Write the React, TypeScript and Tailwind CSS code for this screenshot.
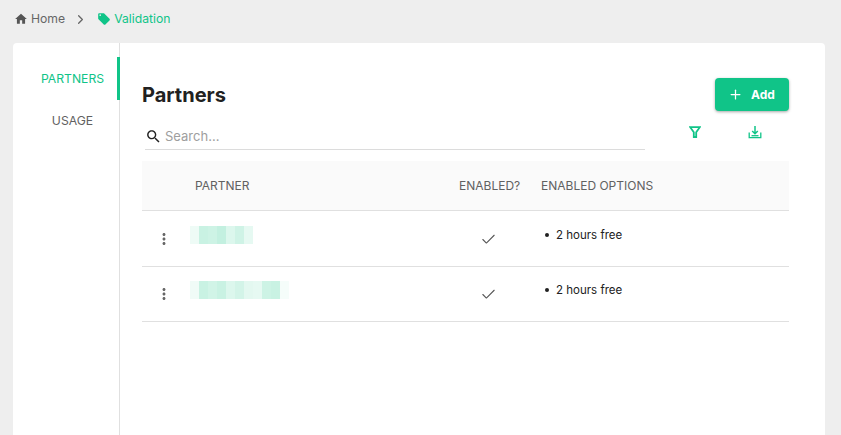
import { Check, ChevronRight, Plus } from 'lucide-react'

const rows = [
  {
    id: 'a',
    frame: 'h-[56px] pt-[15px]',
    blur: ['#eefbf6', '#c9f2e3', '#cdf3e5', '#c3f0e0', '#dcf7ed', '#cff3e6', '#e6f9f2'],
  },
  {
    id: 'b',
    frame: 'h-[55px] pt-[14px]',
    blur: ['#f0fbf7', '#c9f2e3', '#d1f4e7', '#c9f2e3', '#dcf7ed', '#d3f4e8', '#e3f8f0', '#e6f9f2', '#cdf3e5', '#c9f2e3', '#f5fdfa'],
  },
]

function Blur({ cells }: { cells: string[] }) {
  return (
    <div className="flex h-[18px]">
      {cells.map((c, i) => (
        <div key={i} className="w-[9px]" style={{ backgroundColor: c }} />
      ))}
    </div>
  )
}

function Glyph({ d, size, className }: { d: string; size: number; className?: string }) {
  return (
    <svg width={size} height={size} viewBox="0 0 24 24" fill="currentColor" className={className}>
      <path d={d} />
    </svg>
  )
}

export default function App() {
  return (
    <div className="h-[435px] overflow-hidden bg-[#eeeeee] font-['Inter',sans-serif] text-[#212121]">
      {/* Breadcrumb */}
      <div className="flex h-[43px] items-center pb-[5px] pl-[14px] text-[12.2px]">
        <Glyph d="M10 20v-6h4v6h5v-8h3L12 3 2 12h3v8z" size={14} className="text-[#555555]" />
        <span className="ml-[3px] text-[#666666]">Home</span>
        <ChevronRight size={15} strokeWidth={2} className="ml-[8px] text-[#666666]" />
        <Glyph
          d="M21.41 11.58l-9-9C12.05 2.22 11.55 2 11 2H4c-1.1 0-2 .9-2 2v7c0 .55.22 1.05.59 1.42l9 9c.36.36.86.58 1.41.58.55 0 1.05-.22 1.41-.59l7-7c.37-.36.59-.86.59-1.41 0-.55-.23-1.06-.59-1.42zM5.5 7C4.67 7 4 6.33 4 5.5S4.67 4 5.5 4 7 4.67 7 5.5 6.33 7 5.5 7z"
          size={14}
          className="ml-[9px] text-[#10c488]"
        />
        <span className="ml-[3px] text-[#10c488]">Validation</span>
      </div>

      {/* Card */}
      <div className="ml-[13px] mr-[16px] flex h-[392px] rounded-t-[4px] bg-white">
        <div className="w-[107px] border-r border-[#e0e0e0] pt-[14px] text-[12.2px]">
          <div className="-mr-px flex h-[43px] items-center justify-center border-r-[3px] border-[#10c488] pl-[15px] pt-[1px] text-[#10c488]">
            PARTNERS
          </div>
          <div className="flex h-[43px] items-center justify-center pl-[13px] text-[#616161]">USAGE</div>
        </div>

        <div className="box-content w-[647px] pl-[22px]">
          <div className="flex h-[68px] items-end justify-between">
            <h1 className="mb-[1px] text-[20px] font-bold leading-[30px] text-[#212121]">Partners</h1>
            <button className="flex h-[33px] w-[74px] items-center gap-[8px] rounded-[4px] bg-[#10c488] pl-[13px] text-[12px] font-bold text-white shadow-[0_1px_3px_rgba(0,0,0,0.35)]">
              <Plus size={15} strokeWidth={2} />
              Add
            </button>
          </div>

          <div className="flex h-[50px]">
            <div className="ml-[3px] mt-[12px] flex h-[27px] w-[500px] items-center gap-[3px] border-b border-[#dcdcdc] pt-[1px]">
              <Glyph
                d="M15.5 14h-.79l-.28-.27C15.41 12.59 16 11.11 16 9.5 16 5.91 13.09 3 9.5 3S3 5.91 3 9.5 5.91 16 9.5 16c1.61 0 3.09-.59 4.23-1.57l.27.28v.79l5 4.99L20.49 19l-4.99-5zm-6 0C7.01 14 5 11.99 5 9.5S7.01 5 9.5 5 14 7.01 14 9.5 11.99 14 9.5 14z"
                size={17}
                className="text-[#212121]"
              />
              <span className="text-[13px] text-[#9e9e9e]">Search...</span>
            </div>
            <div className="ml-[44px] mt-[15px]">
              <svg width="12" height="12" viewBox="0 0 12 12" fill="none" stroke="#10c488" strokeWidth="1.8">
                <path d="M1.2 1.2h9.6L7.2 6.2V11H4.8V6.2z" />
              </svg>
            </div>
            <div className="ml-[47px] mt-[14px]">
              <svg width="14" height="14" viewBox="0 0 14 14" fill="none" stroke="#10c488" strokeWidth="1.3">
                <path d="M1.2 7.5V12.6H12.8V7.5" />
                <path d="M7 1V8.5M4.2 6L7 8.8 9.8 6" strokeWidth="1.5" />
                <path d="M3.5 10.7H10.5" />
              </svg>
            </div>
          </div>

          {/* Table */}
          <div className="grid h-[50px] grid-cols-[317px_82px_1fr] items-center border-b border-[#e0e0e0] bg-[#fafafa] text-[12px] text-[#616161]">
            <div className="pl-[53px]">PARTNER</div>
            <div>ENABLED?</div>
            <div>ENABLED OPTIONS</div>
          </div>
          {rows.map((row) => (
            <div key={row.id} className={`grid grid-cols-[48px_269px_82px_1fr] border-b border-[#e0e0e0] ${row.frame}`}>
              <div className="flex justify-center pr-[4px] pt-[4px]">
                <Glyph
                  d="M12 8c1.1 0 2-.9 2-2s-.9-2-2-2-2 .9-2 2 .9 2 2 2zm0 2c-1.1 0-2 .9-2 2s.9 2 2 2 2-.9 2-2-.9-2-2-2zm0 6c-1.1 0-2 .9-2 2s.9 2 2 2 2-.9 2-2-.9-2-2-2z"
                  size={18}
                  className="text-[#666666]"
                />
              </div>
              <div>
                <Blur cells={row.blur} />
              </div>
              <div className="pl-[21px] pt-[5px]">
                <Check size={17} strokeWidth={1.5} className="text-[#555555]" />
              </div>
              <div className="flex items-start pt-[1px] text-[11.5px] leading-[16px] text-[#212121]">
                <span className="ml-[4px] mr-[7px] mt-[6px] h-[4px] w-[4px] rounded-full bg-[#212121]" />
                2 hours free
              </div>
            </div>
          ))}
        </div>
      </div>
    </div>
  )
}
